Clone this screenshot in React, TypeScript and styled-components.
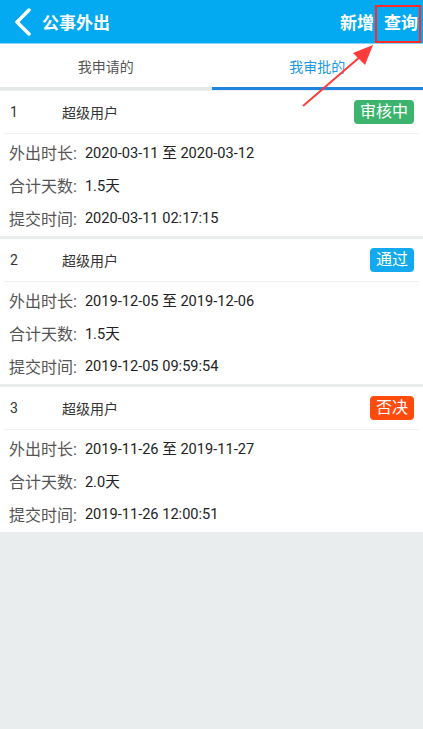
import styled, {createGlobalStyle} from "styled-components";

const GlobalStyle = createGlobalStyle`
    html, body {
        margin: 0;
        padding: 0;
        background: #e9eded;
    }
    body {
        font-family: Roboto, "Noto Sans CJK SC", "Liberation Sans", sans-serif;
    }
`;

const Page = styled.div`
    position: relative;
    width: 423px;
    min-height: 729px;
    background: #e9eded;
`;

const TopBar = styled.div`
    height: 44px;
    background: #03a9f1;
    border-bottom: 1px solid #8ad3f6;
    display: flex;
    align-items: center;
    color: white;
    box-sizing: border-box;
`;

const BackBtn = styled.div`
    width: 38px;
    height: 44px;
    display: flex;
    align-items: center;
    justify-content: center;
    margin-left: 4px;
`;

const Title = styled.div`
    font-size: 17px;
    font-weight: bold;
    flex: 1;
`;

const TopAction = styled.div`
    font-size: 17px;
    font-weight: bold;
    padding: 0 5px;
`;

const Tabs = styled.div`
    display: flex;
    background: white;
`;

const Tab = styled.div<{ $active?: boolean }>`
    flex: 1;
    height: 43px;
    display: flex;
    align-items: center;
    justify-content: center;
    font-size: 14px;
    color: ${(p) => (p.$active ? "#1a9ae6" : "#555")};
    border-bottom: 3px solid ${(p) => (p.$active ? "#1f86e0" : "#e3e8e8")};
`;

const List = styled.div`
    display: flex;
    flex-direction: column;
    gap: 3px;
    padding-top: 1px;
`;

const Card = styled.div`
    background: white;
    padding: 0 4px 2px;
`;

const CardHead = styled.div`
    height: 42px;
    display: flex;
    align-items: center;
    font-size: 14px;
    color: #333;
    border-bottom: 1px solid #eef1f1;
`;

const Num = styled.div`
    width: 52px;
    padding-left: 6px;
`;

const User = styled.div`
    flex: 1;
`;

const Badge = styled.div<{ $color: string }>`
    background: ${(p) => p.$color};
    color: white;
    font-size: 16px;
    padding: 1px 6px;
    border-radius: 4px;
    margin-right: 5px;
    line-height: 22px;
`;

const Rows = styled.div`
    padding-top: 1px;
`;

const Row = styled.div`
    height: 33px;
    display: flex;
    align-items: center;
    padding-left: 5px;
    font-size: 14.6px;
    color: #222;
    white-space: pre;
`;

const Label = styled.span`
    color: #555;
    font-size: 16px;
    margin-right: 8px;
`;

const Mark = styled.div`
    position: absolute;
    left: 375px;
    top: 5px;
    width: 46px;
    height: 38px;
    border: 2px solid #ff2a2a;
    box-sizing: border-box;
`;

const Arrow = styled.svg`
    position: absolute;
    left: 295px;
    top: 36px;
`;

const items = [
    {n: 1, range: "2020-03-11 至 2020-03-12", days: "1.5天", time: "2020-03-11 02:17:15", status: "审核中", color: "#3cb46e"},
    {n: 2, range: "2019-12-05 至 2019-12-06", days: "1.5天", time: "2019-12-05 09:59:54", status: "通过", color: "#13a9ee"},
    {n: 3, range: "2019-11-26 至 2019-11-27", days: "2.0天", time: "2019-11-26 12:00:51", status: "否决", color: "#ff4b0c"},
];

export default function App() {
    return (
        <Page>
            <GlobalStyle/>
            <TopBar>
                <BackBtn>
                    <svg width="20" height="28" viewBox="0 0 20 28">
                        <path d="M16 2 L4 14 L16 26" fill="none" stroke="white" strokeWidth="3.5" strokeLinecap="round" strokeLinejoin="round"/>
                    </svg>
                </BackBtn>
                <Title>公事外出</Title>
                <TopAction>新增</TopAction>
                <TopAction>查询</TopAction>
            </TopBar>
            <Tabs>
                <Tab>我申请的</Tab>
                <Tab $active>我审批的</Tab>
            </Tabs>
            <List>
                {items.map((it) => (
                    <Card key={it.n}>
                        <CardHead>
                            <Num>{it.n}</Num>
                            <User>超级用户</User>
                            <Badge $color={it.color}>{it.status}</Badge>
                        </CardHead>
                        <Rows>
                            <Row><Label>外出时长:</Label>{it.range}</Row>
                            <Row><Label>合计天数:</Label>{it.days}</Row>
                            <Row><Label>提交时间:</Label>{it.time}</Row>
                        </Rows>
                    </Card>
                ))}
            </List>
            <Mark/>
            <Arrow width="85" height="75" viewBox="0 0 85 75">
                <line x1="8" y1="70" x2="66" y2="20" stroke="#ff3b3b" strokeWidth="2"/>
                <polygon points="78,9 58,17 70,29" fill="#ff3b3b"/>
            </Arrow>
        </Page>
    );
}
